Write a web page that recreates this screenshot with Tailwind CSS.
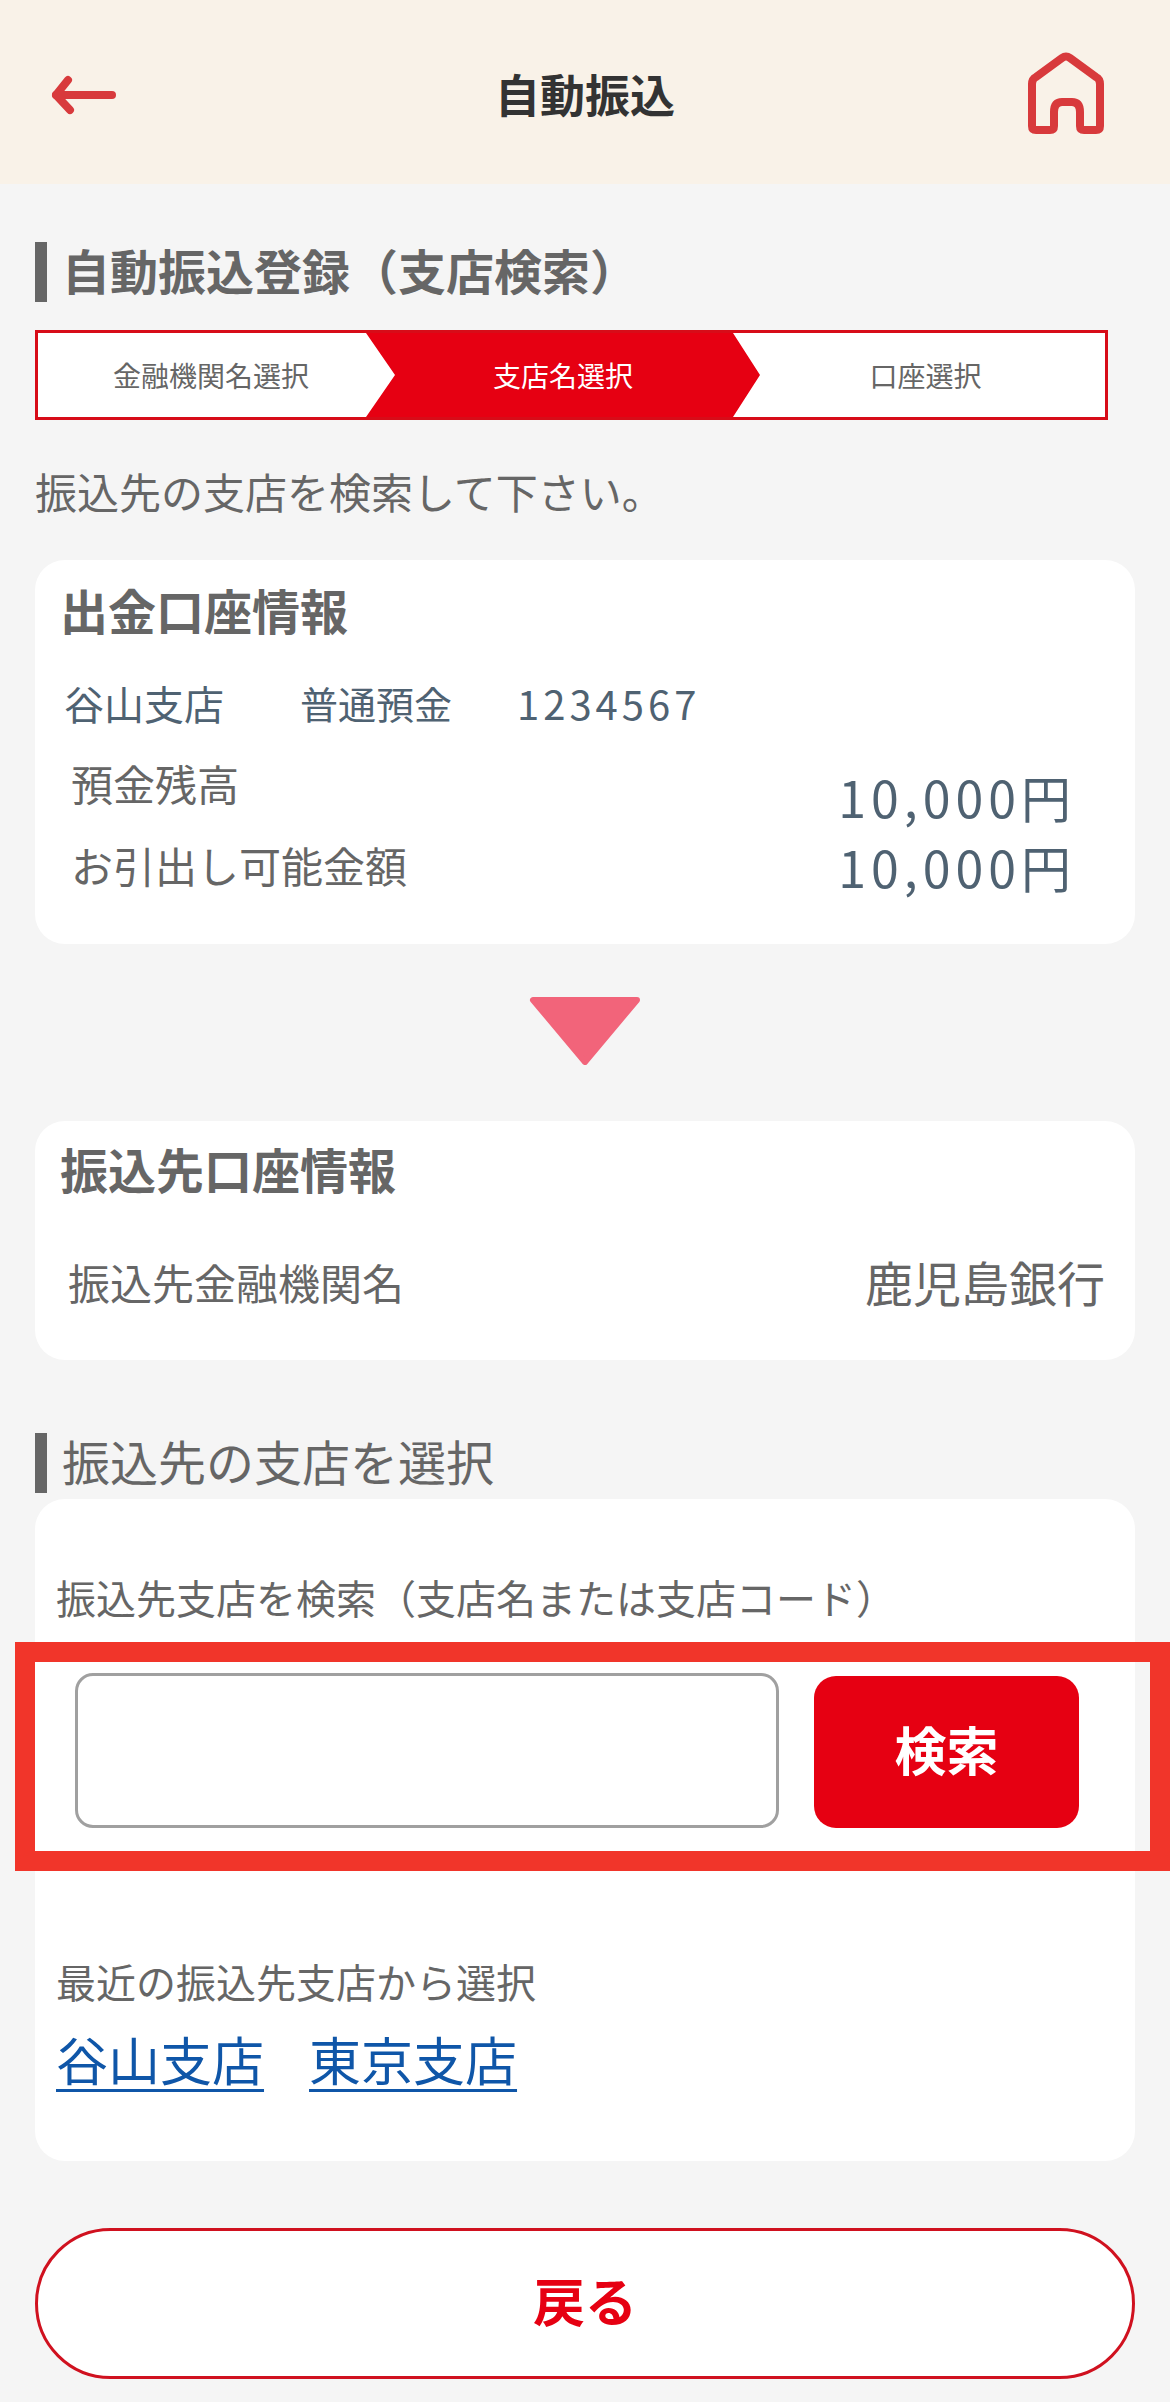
<!DOCTYPE html>
<html lang="ja">
<head>
<meta charset="utf-8">
<title>自動振込</title>
<script src="https://cdn.jsdelivr.net/npm/@tailwindcss/browser@4"></script>
</head>
<body class="m-0 bg-[#f5f5f5] font-['Noto_Sans_CJK_JP','Noto_Sans',sans-serif]">
<div class="relative w-[1170px] h-[2402px] overflow-hidden bg-[#f5f5f5]">
  <header class="h-[184px] bg-[#f9f2e8] flex items-center justify-between relative">
    <svg class="absolute left-[44px] top-[71px]" width="80" height="48" viewBox="0 0 80 48" fill="none" stroke="#d83a3c" stroke-width="8" stroke-linecap="round" stroke-linejoin="round"><path d="M68 24H12"/><path d="M24 9 12 24 26 39"/></svg>
    <h1 class="w-full text-center text-[45px] leading-[60px] font-bold text-[#333] mt-[4px]">自動振込</h1>
    <svg class="absolute left-[1024px] top-[48px]" width="84" height="90" viewBox="0 0 84 90" fill="none" stroke="#d83a3c" stroke-width="8" stroke-linejoin="round" stroke-linecap="round"><path d="M8 36Q8 31 12 29L38 10Q42 7 46 10L72 29Q76 31 76 36V78Q76 82 72 82H60Q56 82 56 78V64Q56 54 48 54H38Q30 54 30 64V78Q30 82 26 82H12Q8 82 8 78Z"/></svg>
  </header>

  <main class="px-[35px]">
    <h2 class="mt-[58px] h-[60px] border-l-[12px] border-[#666] pl-[15px] text-[48px] leading-[54px] font-bold text-[#666] whitespace-nowrap">自動振込登録（支店検索）</h2>

    <div class="mt-[28px] w-[1073px] h-[90px] border-[3px] border-[#d70c18] bg-white flex text-[28px] leading-[84px] text-center">
      <div class="w-[328px] pl-[18px] text-[#666]">金融機関名選択</div>
      <div class="w-[394px] bg-[#e60012] text-white [clip-path:polygon(0_0,367px_0,394px_50%,367px_100%,0_100%,29px_50%)]">支店名選択</div>
      <div class="flex-1 pr-[14px] text-[#666]">口座選択</div>
    </div>

    <p class="mt-[46px] h-[52px] text-[42px] leading-[50px] text-[#666] whitespace-nowrap">振込先の支店を検索して下さい。</p>

    <section class="mt-[42px] h-[384px] rounded-[30px] bg-white pt-[21px] pl-[25px] pr-[27px]">
      <h3 class="h-[60px] text-[48px] leading-[56px] font-bold text-[#666]">出金口座情報</h3>
      <div class="mt-[38px] h-[50px] flex text-[40px] leading-[48px] text-[#4f6272] pl-[4px]">
        <span class="w-[236px]">谷山支店</span><span class="w-[217px] text-[38px]">普通預金</span><span class="tracking-[4px]">1234567</span>
      </div>
      <div class="mt-[33px] flex justify-between pl-[11px] pr-[32px] h-[81px]">
        <span class="h-[50px] text-[42px] leading-[42px] text-[#666]">預金残高</span>
        <span class="mt-[13px] h-[50px] text-[50px] leading-[42px] tracking-[5px] text-[#4f6272]">10,000円</span>
      </div>
      <div class="flex justify-between pl-[11px] pr-[32px]">
        <span class="h-[50px] text-[42px] leading-[44px] text-[#666]">お引出し可能金額</span>
        <span class="mt-[2px] h-[50px] text-[50px] leading-[42px] tracking-[5px] text-[#4f6272]">10,000円</span>
      </div>
    </section>

    <div class="mt-[53px] h-[68px] flex justify-center">
      <svg width="116" height="68" viewBox="0 0 116 68"><path d="M6 3H110L58 65Z" fill="#f2647a" stroke="#f2647a" stroke-width="6" stroke-linejoin="round"/></svg>
    </div>

    <section class="mt-[56px] h-[239px] rounded-[30px] bg-white pt-[20px] px-[25px]">
      <h3 class="h-[60px] text-[48px] leading-[54px] font-bold text-[#666]">振込先口座情報</h3>
      <div class="mt-[50px] flex justify-between items-center h-[60px] pl-[8px] pr-[5px] text-[#666]">
        <span class="text-[42px]">振込先金融機関名</span>
        <span class="text-[48px]">鹿児島銀行</span>
      </div>
    </section>

    <h2 class="mt-[73px] h-[60px] border-l-[12px] border-[#666] pl-[15px] text-[48px] leading-[54px] text-[#666] whitespace-nowrap">振込先の支店を選択</h2>

    <section class="mt-[6px] h-[662px] rounded-[30px] bg-white px-[21px] pt-[73px]">
      <p class="h-[51px] text-[40px] leading-[50px] text-[#666] whitespace-nowrap">振込先支店を検索（支店名または支店コード）</p>
      <div class="mt-[50px] ml-[19px] flex items-stretch">
        <input type="text" aria-label="支店検索" class="w-[704px] h-[155px] rounded-[18px] border-[3px] border-[#a0a0a0] bg-white">
        <button class="ml-[35px] mt-[3px] pb-[6px] w-[265px] h-[152px] rounded-[22px] bg-[#e60012] text-white text-[52px] font-bold">検索</button>
      </div>
      <p class="mt-[128px] h-[52px] text-[40px] leading-[50px] text-[#666] whitespace-nowrap">最近の振込先支店から選択</p>
      <div class="mt-[21px] flex gap-[45px] text-[52px] leading-[60px] text-[#0f56a8]">
        <a href="#" class="underline decoration-[3px] underline-offset-[8px]">谷山支店</a>
        <a href="#" class="underline decoration-[3px] underline-offset-[8px]">東京支店</a>
      </div>
    </section>

    <button class="mt-[67px] block w-[1100px] h-[151px] rounded-full border-[3px] border-[#d0111f] bg-white text-[52px] leading-[60px] font-bold text-[#e60012] pb-[8px]">戻る</button>
  </main>

  <div class="absolute left-[15px] top-[1642px] w-[1155px] h-[229px] border-[20px] border-[#f1352a] pointer-events-none"></div>
</div>
</body>
</html>
